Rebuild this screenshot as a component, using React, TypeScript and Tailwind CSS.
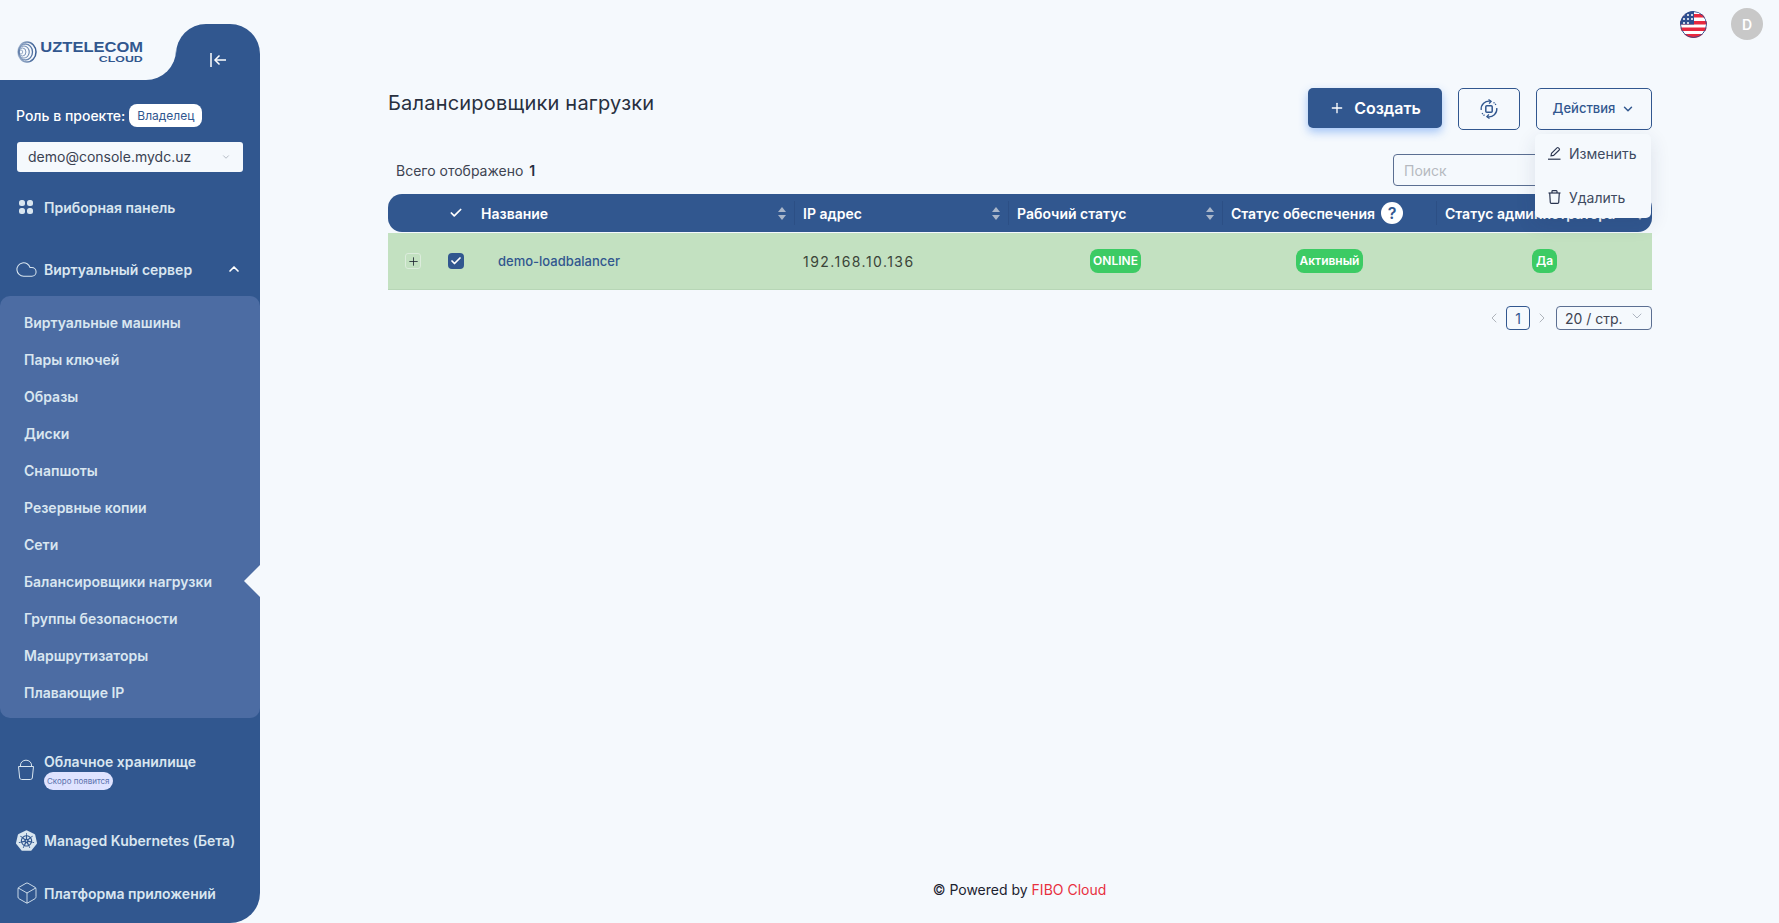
import React from 'react';
import { ChevronDown, ChevronUp, ChevronLeft, ChevronRight, Check, Plus, Cloud, Box } from 'lucide-react';
import { SiKubernetes } from 'react-icons/si';

const subItems = [
  'Виртуальные машины',
  'Пары ключей',
  'Образы',
  'Диски',
  'Снапшоты',
  'Резервные копии',
  'Сети',
  'Балансировщики нагрузки',
  'Группы безопасности',
  'Маршрутизаторы',
  'Плавающие IP',
];

const LogoMark = () => (
  <svg width="20" height="22" viewBox="0 0 20 22" fill="none" stroke="url(#logoFade)">
    <defs>
      <linearGradient id="logoFade" gradientUnits="userSpaceOnUse" x1="0" y1="0" x2="20" y2="0">
        <stop offset="0" stopColor="#31578f" stopOpacity="0.35" />
        <stop offset="1" stopColor="#31578f" />
      </linearGradient>
    </defs>
    <ellipse cx="10" cy="11" rx="9" ry="10" strokeWidth="1.500" />
    <ellipse cx="8.500" cy="11" rx="7" ry="8" strokeWidth="1.300" />
    <ellipse cx="7" cy="11" rx="5.200" ry="6" strokeWidth="1.100" />
    <ellipse cx="5.500" cy="11" rx="3.400" ry="4" strokeWidth="1" />
    <ellipse cx="4" cy="11" rx="1.700" ry="2" strokeWidth="0.900" />
  </svg>
);

const GridIcon = () => (
  <svg width="16" height="16" viewBox="0 0 16 16" fill="#d9e6f0">
    <rect x="1" y="1" width="6" height="6" rx="2.500" />
    <rect x="9" y="1" width="6" height="6" rx="2.500" />
    <rect x="1" y="9" width="6" height="6" rx="2.500" />
    <rect x="9" y="9" width="6" height="6" rx="2.500" />
  </svg>
);

const BucketIcon = () => (
  <svg width="18" height="22" viewBox="0 0 18 22" fill="none" stroke="#d9e6f0" strokeWidth="1">
    <path d="M1.500 7.500h15l-1.200 11.500a2 2 0 0 1-2 1.500H4.700a2 2 0 0 1-2-1.500L1.500 7.500z" />
    <path d="M3.500 7.500V6a5.500 4.800 0 0 1 11 0v1.500" />
  </svg>
);

const CollapseIcon = () => (
  <svg width="16" height="14" viewBox="0 0 16 14" fill="none" stroke="#ffffff" strokeWidth="1.500">
    <path d="M1 0v14" />
    <path d="M16 7H5" />
    <path d="M9.500 2.500L5 7l4.500 4.500" />
  </svg>
);

const RotateIcon = () => (
  <svg width="20" height="20" viewBox="0 0 20 20" fill="none" stroke="#31578f" strokeWidth="1.300">
    <rect x="6.800" y="6.800" width="6.400" height="6.400" rx="1" strokeWidth="1.500" />
    <path d="M2.200 11A8 8 0 0 1 11.500 2.200" />
    <path d="M9.500.5l2.600 1.800-2 2.300" />
    <path d="M17.800 9A8 8 0 0 1 8.500 17.800" />
    <path d="M10.500 19.500l-2.600-1.800 2-2.300" />
    <path d="M14.500 3.500a8 8 0 0 1 2.500 2.500" strokeDasharray="1.200 1" />
    <path d="M5.500 16.500A8 8 0 0 1 3 14" strokeDasharray="1.200 1" />
  </svg>
);

const EditIcon = () => (
  <svg width="13" height="14" viewBox="0 0 13 14" fill="none" stroke="#2a3550" strokeWidth="1.100">
    <path d="M3 9.800l.5-2.500L9 1.800a1 1 0 0 1 1.400 0l.8.800a1 1 0 0 1 0 1.400L5.600 9.400 3 9.800z" />
    <path d="M0 13.200h12.500" strokeWidth="1.200" />
  </svg>
);

const BinIcon = () => (
  <svg width="13" height="14" viewBox="0 0 13 14" fill="none" stroke="#2a3550" strokeWidth="1.200">
    <path d="M.5 3h12" />
    <path d="M4 3V1.300a.6.6 0 0 1 .6-.6h3.800a.6.6 0 0 1 .6.6V3" />
    <path d="M1.700 3l.6 9.500a1 1 0 0 0 1 .9h6.400a1 1 0 0 0 1-.9l.6-9.500" />
  </svg>
);

const UsFlag = () => (
  <svg width="27" height="27" viewBox="0 0 27 27" className="rounded-full">
    <rect width="27" height="27" fill="#fff" />
    <rect y="3" width="27" height="3.500" fill="#e8283f" />
    <rect y="10" width="27" height="3.500" fill="#e8283f" />
    <rect y="16.500" width="27" height="3.500" fill="#e8283f" />
    <rect y="23" width="27" height="4" fill="#e8283f" />
    <rect width="14" height="13.500" fill="#2f4f8f" />
    <circle cx="4" cy="4" r="1" fill="#fff" />
    <circle cx="8" cy="4" r="1" fill="#fff" />
    <circle cx="12" cy="4" r="1" fill="#fff" />
    <circle cx="4" cy="8" r="1" fill="#fff" />
    <circle cx="8" cy="8" r="1" fill="#fff" />
    <circle cx="12" cy="8" r="1" fill="#fff" />
    <circle cx="4" cy="12" r="1" fill="#fff" />
    <circle cx="8" cy="12" r="1" fill="#fff" />
    <circle cx="13.500" cy="13.500" r="13" fill="none" stroke="#2f4f8f" strokeWidth="1" />
  </svg>
);

const SortIcon = () => (
  <span className="flex flex-col gap-[3px]">
    <span className="h-0 w-0 border-x-[4px] border-b-[5px] border-x-transparent border-b-[#a9b6c9]" />
    <span className="h-0 w-0 border-x-[4px] border-t-[5px] border-x-transparent border-t-[#a9b6c9]" />
  </span>
);

const Sidebar = () => (
  <aside className="flex h-[923px] w-[260px] shrink-0 flex-col rounded-br-[30px] bg-[#31578f] font-semibold text-[#d9e6f0]">
    <div className="flex h-[80px] shrink-0">
      <div className="flex w-[176px] items-center gap-[19px] rounded-br-[30px] bg-[#f5f9fd] pl-[17px] pt-[24px] text-[#31578f]">
        <LogoMark />
        <div className="flex w-[87px] flex-col items-end font-['Liberation_Sans'] font-bold leading-none">
          <span className="origin-right scale-x-[1.18] text-[14px] leading-[13px]">UZTELECOM</span>
          <span className="origin-right scale-x-[1.3] text-[9.500px] leading-[10px]">CLOUD</span>
        </div>
      </div>
      <div className="flex-1 bg-[#f5f9fd] pt-[24px]">
        <div className="flex h-[56px] items-center justify-center rounded-t-[30px] bg-[#31578f] pt-[16px] text-white">
          <CollapseIcon />
        </div>
      </div>
    </div>

    <div className="mt-[24px] flex h-[23px] items-center gap-[4px] pl-[16px] text-[14px] font-medium text-white">
      <span>Роль в проекте:</span>
      <span className="rounded-[8px] bg-white px-[8px] py-[3px] text-[12px] font-normal leading-[17px] text-[#31578f]">Владелец</span>
    </div>

    <div className="ml-[17px] mt-[15px] flex h-[30px] w-[226px] items-center justify-between rounded-[3px] bg-[#f5f9fd] pb-[1px] pl-[11px] pr-[12px] text-[14px] font-normal text-[#3a4252]">
      <span>demo@console.mydc.uz</span>
      <ChevronDown size={10} className="text-[#a8b0ba]" />
    </div>

    <div className="mt-[15px] flex h-[40px] items-center gap-[10px] pl-[18px] text-[14px]">
      <GridIcon />
      <span>Приборная панель</span>
    </div>

    <div className="mt-[22px] flex h-[40px] items-center pl-[15px] pr-[18px] text-[14px]">
      <Cloud size={23} strokeWidth={1.1} />
      <span className="ml-[6px] flex-1">Виртуальный сервер</span>
      <ChevronUp size={16} strokeWidth={2.5} className="text-white" />
    </div>

    <div className="relative mt-[7px] rounded-[10px] bg-[#4c6ca3] pb-[7px] pt-[8px] text-[14px]">
      {subItems.map((item) => (
        <div key={item} className="relative flex h-[37px] items-center pl-[24px]">
          {item}
          {item === 'Балансировщики нагрузки' && (
            <span className="absolute right-0 top-[2px] h-0 w-0 border-y-[16px] border-r-[16px] border-y-transparent border-r-[#f5f9fd]" />
          )}
        </div>
      ))}
    </div>

    <div className="mt-[34px] flex pl-[17px]">
      <span className="mt-[7px]"><BucketIcon /></span>
      <div className="ml-[9px] flex flex-col items-start">
        <span className="h-[20px] text-[14px] leading-[20px]">Облачное хранилище</span>
        <span className="h-[18px] rounded-[9px] bg-[#dfe3ff] px-[3px] text-[8px] font-normal leading-[18px] text-[#5a72ad]">Скоро появится</span>
      </div>
    </div>

    <div className="mt-[30px] flex h-[40px] items-center gap-[7px] pl-[16px] text-[14px]">
      <SiKubernetes size={21} />
      <span>Managed Kubernetes (Бета)</span>
    </div>

    <div className="mt-[13px] flex h-[40px] items-center gap-[5px] pl-[15px] text-[14px]">
      <Box size={24} strokeWidth={0.9} />
      <span>Платформа приложений</span>
    </div>
  </aside>
);

const Pill = ({ children }: { children: React.ReactNode }) => (
  <span className="ml-[1px] flex h-[24px] items-center rounded-[8px] bg-[#3ccb64] px-[3.500px] text-[12px] font-semibold text-white">{children}</span>
);

const HeaderCell = ({ children, sort = true }: { children: React.ReactNode; sort?: boolean }) => (
  <div className="flex h-[24px] items-center justify-between border-l border-[#2c4f85] pl-[8px] pr-[8px]">
    <span className="flex items-center">{children}</span>
    {sort && <SortIcon />}
  </div>
);

const LoadBalancers = () => (
  <div className="relative pl-[128px] pr-[127px]">
    <div className="mt-[40px] flex items-start justify-between">
      <h1 className="pt-[1px] text-[20px] leading-[28px] tracking-[0.2px] text-[#28303f]">Балансировщики нагрузки</h1>
      <div className="flex items-start gap-[16px]">
        <button className="flex h-[40px] w-[134px] items-center justify-center gap-[9px] rounded-[5px] bg-[#31578f] pb-[1px] text-[16px] font-semibold text-white shadow-[0_4px_10px_rgba(60,130,240,0.45)]">
          <Plus size={16} strokeWidth={2} />
          Создать
        </button>
        <button className="flex h-[42px] w-[62px] items-center justify-center rounded-[5px] border border-[#31578f]">
          <RotateIcon />
        </button>
        <div className="relative">
          <button className="flex h-[42px] w-[116px] items-center justify-center gap-[6px] rounded-[5px] border border-[#31578f] text-[13px] font-medium text-[#31578f]">
            Действия
            <ChevronDown size={14} strokeWidth={2.5} />
          </button>
          <div className="absolute right-[1px] top-[46px] z-10 h-[84px] w-[116px] rounded-[5px] bg-[#f5f9fd] text-[14px] text-[#3e4a61] shadow-[0_6px_20px_rgba(30,50,90,0.12)]">
            <div className="flex h-[42px] items-center gap-[8px] pb-[4px] pl-[13px]">
              <EditIcon />
              Изменить
            </div>
            <div className="flex h-[42px] items-center gap-[8px] pl-[13px]">
              <BinIcon />
              Удалить
            </div>
          </div>
        </div>
      </div>
    </div>

    <div className="mt-[24px] flex items-center justify-between pl-[8px] pr-[6px]">
      <span className="text-[14px] text-[#3e4452]">
        Всего отображено <span className="ml-[2px] font-semibold text-[#28303f]">1</span>
      </span>
      <div className="flex h-[32px] w-[253px] items-center rounded-[4px] border border-[#5b6f92] pl-[10px] text-[14px] text-[#b5b9c0]">Поиск</div>
    </div>

    <div className="mt-[8px] grid h-[38px] grid-cols-[49px_38px_319px_214px_214px_214px_216px] items-center rounded-[14px] bg-[#31578f] text-[14px] font-semibold text-white">
      <span />
      <span className="flex justify-center"><Check size={14} strokeWidth={3} /></span>
      <div className="flex h-[24px] items-center justify-between pl-[6px] pr-[8px]">
        <span>Название</span>
        <SortIcon />
      </div>
      <HeaderCell>IP адрес</HeaderCell>
      <HeaderCell>Рабочий статус</HeaderCell>
      <HeaderCell sort={false}>
        Статус обеспечения
        <span className="ml-[6px] flex h-[22px] w-[22px] items-center justify-center rounded-full bg-white text-[16px] font-semibold text-[#31578f]">?</span>
      </HeaderCell>
      <HeaderCell>Статус администратора</HeaderCell>
    </div>

    <div className="mt-px grid h-[57px] grid-cols-[49px_38px_319px_214px_214px_214px_216px] items-center border-b border-[#b7d6b6] bg-[#c3e1c1] text-[14px]">
      <span className="ml-[17px] flex h-[16px] w-[16px] items-center justify-center rounded-[3px] border border-[#dcecdc] text-[#1c2230]">
        <Plus size={13} strokeWidth={1.5} />
      </span>
      <span className="flex justify-center">
        <span className="flex h-[16px] w-[16px] items-center justify-center rounded-[4px] bg-[#31578f] text-white">
          <Check size={12} strokeWidth={3.5} />
        </span>
      </span>
      <span className="pl-[23px] pt-[1px] text-[13px] font-medium text-[#31578f]">demo-loadbalancer</span>
      <span className="pl-[9px] tracking-[1.45px] text-[#3a4438]">192.168.10.136</span>
      <span className="flex justify-center"><Pill>ONLINE</Pill></span>
      <span className="flex justify-center"><Pill>Активный</Pill></span>
      <span className="flex justify-center"><Pill>Да</Pill></span>
    </div>

    <div className="mt-[16px] flex items-center justify-end text-[14px] text-[#3e4452]">
      <ChevronLeft size={16} strokeWidth={1.3} className="mr-[4px] text-[#a4a9b1]" />
      <span className="flex h-[24px] w-[24px] items-center justify-center rounded-[4px] border border-[#31578f] text-[#31578f]">1</span>
      <ChevronRight size={16} strokeWidth={1.3} className="ml-[4px] mr-[6px] text-[#a4a9b1]" />
      <span className="flex h-[24px] w-[96px] items-center justify-between rounded-[4px] border border-[#5b6f92] pl-[8px] pr-[6px]">
        20 / стр.
        <ChevronDown size={16} strokeWidth={1} className="-mt-[4px] text-[#8a93a3]" />
      </span>
    </div>
  </div>
);

export default function App() {
  return (
    <div className="flex h-[923px] w-[1779px] overflow-hidden bg-[#f5f9fd] font-['Inter',sans-serif]">
      <Sidebar />
      <main className="flex min-w-0 flex-1 flex-col">
        <div className="flex h-[48px] items-center justify-end gap-[24px] pr-[16px]">
          <UsFlag />
          <span className="flex h-[32px] w-[32px] items-center justify-center rounded-full bg-[#c8c8c8] text-[14px] font-semibold text-white">D</span>
        </div>
        <LoadBalancers />
        <footer className="mt-auto pb-[23px] text-center text-[14px] leading-[20px] text-[#1c2230]">
          © Powered by <span className="text-[#e8303f]">FIBO Cloud</span>
        </footer>
      </main>
    </div>
  );
}
